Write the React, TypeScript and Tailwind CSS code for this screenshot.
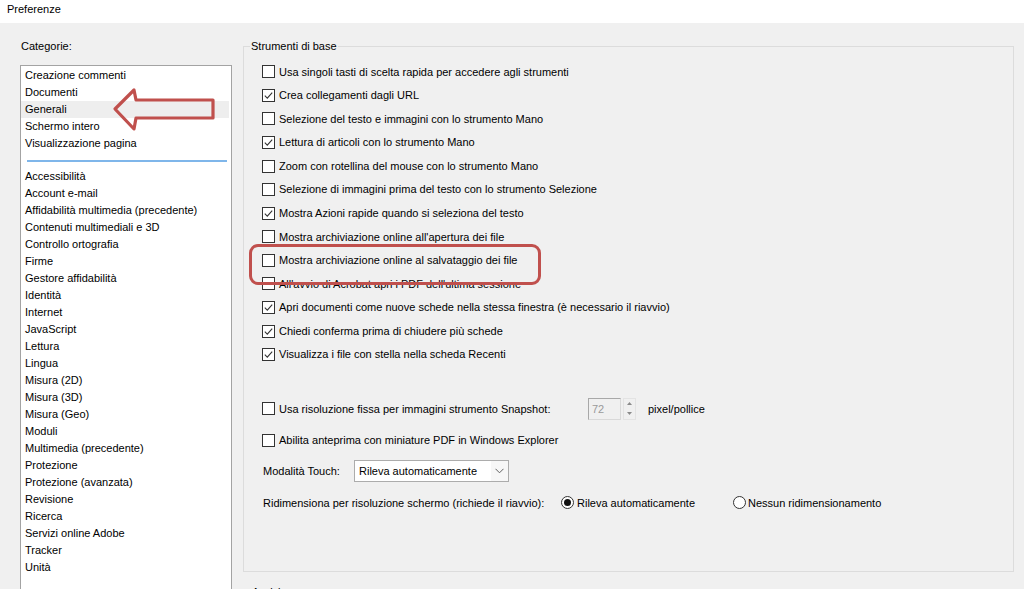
import React from "react";

const Check = ({ checked }: { checked?: boolean }) => (
  <span className="w-[13px] h-[13px] border border-[#333333] bg-white flex items-center justify-center shrink-0">
    {checked && (
      <svg width="11" height="11" viewBox="0 0 11 11">
        <path d="M1.8 5.6 L4.3 8.1 L9.2 2.6" fill="none" stroke="#333333" strokeWidth="1.1" />
      </svg>
    )}
  </span>
);

const Radio = ({ checked }: { checked?: boolean }) => (
  <span className="w-[13px] h-[13px] rounded-full border border-[#333333] bg-white flex items-center justify-center shrink-0">
    {checked && <span className="w-[7px] h-[7px] rounded-full bg-[#111111]" />}
  </span>
);

const CheckRow = ({ checked, text }: { checked?: boolean; text: string }) => (
  <div className="flex items-center h-[23.58px]">
    <Check checked={checked} />
    <span className="ml-[4px] whitespace-nowrap">{text}</span>
  </div>
);

const topItems = [
  "Creazione commenti",
  "Documenti",
  "Generali",
  "Schermo intero",
  "Visualizzazione pagina",
];

const otherItems = [
  "Accessibilità",
  "Account e-mail",
  "Affidabilità multimedia (precedente)",
  "Contenuti multimediali e 3D",
  "Controllo ortografia",
  "Firme",
  "Gestore affidabilità",
  "Identità",
  "Internet",
  "JavaScript",
  "Lettura",
  "Lingua",
  "Misura (2D)",
  "Misura (3D)",
  "Misura (Geo)",
  "Moduli",
  "Multimedia (precedente)",
  "Protezione",
  "Protezione (avanzata)",
  "Revisione",
  "Ricerca",
  "Servizi online Adobe",
  "Tracker",
  "Unità",
];

const rows: { checked?: boolean; text: string }[] = [
  { text: "Usa singoli tasti di scelta rapida per accedere agli strumenti" },
  { checked: true, text: "Crea collegamenti dagli URL" },
  { text: "Selezione del testo e immagini con lo strumento Mano" },
  { checked: true, text: "Lettura di articoli con lo strumento Mano" },
  { text: "Zoom con rotellina del mouse con lo strumento Mano" },
  { text: "Selezione di immagini prima del testo con lo strumento Selezione" },
  { checked: true, text: "Mostra Azioni rapide quando si seleziona del testo" },
  { text: "Mostra archiviazione online all'apertura dei file" },
  { text: "Mostra archiviazione online al salvataggio dei file" },
  { text: "All'avvio di Acrobat apri i PDF dell'ultima sessione" },
  { checked: true, text: "Apri documenti come nuove schede nella stessa finestra (è necessario il riavvio)" },
  { checked: true, text: "Chiedi conferma prima di chiudere più schede" },
  { checked: true, text: "Visualizza i file con stella nella scheda Recenti" },
];

export default function App() {
  return (
    <div
      className="relative w-[1024px] h-[589px] overflow-hidden flex flex-col text-[11px] text-black bg-[#f0f0f0]"
      style={{ fontFamily: '"Liberation Sans", Arial, sans-serif' }}
    >
      {/* Title bar */}
      <div className="h-[23px] bg-white shrink-0 pl-[7px] pt-[1px] leading-[17px]">Preferenze</div>

      {/* Body */}
      <div className="flex flex-1 min-h-0">
        {/* Left column */}
        <div className="w-[243px] shrink-0 pl-[20px] pt-[15px]">
          <div className="h-[17px] leading-[17px] pl-[1px]">Categorie:</div>
          <div className="mt-[10px] w-[212px] h-[560px] border border-[#a3a3a3] bg-white pt-[1px]">
            {topItems.map((t) => (
              <div
                key={t}
                className={`h-[17px] leading-[17px] pl-[4px] mr-[2px] whitespace-nowrap ${
                  t === "Generali" ? "bg-[#eeeeee]" : ""
                }`}
              >
                {t}
              </div>
            ))}
            <div className="mt-[8px] mb-[6px] ml-[6px] mr-[4px] h-[2px] bg-[#7fb6ea]" />
            {otherItems.map((t) => (
              <div key={t} className="h-[17px] leading-[17px] pl-[4px] whitespace-nowrap">
                {t}
              </div>
            ))}
          </div>
        </div>

        {/* Right column */}
        <div className="flex-1 pt-[15px]">
          <fieldset className="w-[771px] h-[534px] border border-[#dcdcdc] p-0 m-0">
            <legend className="ml-[6px] px-[1px] leading-[17px]">Strumenti di base</legend>
            <div className="pl-[18px] pt-[5px]">
              {rows.map((r) => (
                <CheckRow key={r.text} checked={r.checked} text={r.text} />
              ))}

              <div className="h-[26.6px]" />

              {/* Snapshot */}
              <div className="flex items-center h-[31.33px]">
                <div className="w-[326px] flex items-center">
                  <Check />
                  <span className="ml-[4px] whitespace-nowrap">Usa risoluzione fissa per immagini strumento Snapshot:</span>
                </div>
                <div className="w-[33px] h-[22px] border border-[#d9d9d9] border-t-[#a8a8a8] border-l-[#a8a8a8] bg-[#f0f0f0] pl-[3px] leading-[20px] text-[#9a9a9a]">
                  72
                </div>
                <div className="ml-[2px] w-[13px] h-[22px] border border-[#e3e3e3] flex flex-col items-center justify-around text-[#8a8a8a]">
                  <svg width="5" height="3" viewBox="0 0 5 3"><path d="M0 3 L2.5 0 L5 3 Z" fill="#8a8a8a" /></svg>
                  <svg width="5" height="3" viewBox="0 0 5 3"><path d="M0 0 L2.5 3 L5 0 Z" fill="#8a8a8a" /></svg>
                </div>
                <span className="ml-[12px] whitespace-nowrap">pixel/pollice</span>
              </div>

              <div className="flex items-center h-[31.33px]">
                <Check />
                <span className="ml-[4px] whitespace-nowrap">Abilita anteprima con miniature PDF in Windows Explorer</span>
              </div>

              <div className="flex items-center h-[31.33px]">
                <span className="w-[92px] pl-[1px] whitespace-nowrap">Modalità Touch:</span>
                <div className="w-[155px] h-[22px] border border-[#acacac] bg-white flex items-center">
                  <span className="flex-1 pl-[4px] whitespace-nowrap">Rileva automaticamente</span>
                  <div className="w-[17px] h-full flex items-center justify-center bg-[#f7f7f7]">
                    <svg width="9" height="6" viewBox="0 0 9 6">
                      <path d="M0.5 0.8 L4.5 4.8 L8.5 0.8" fill="none" stroke="#606060" strokeWidth="1" />
                    </svg>
                  </div>
                </div>
              </div>

              <div className="flex items-center h-[31.33px]">
                <span className="w-[299px] pl-[1px] whitespace-nowrap">Ridimensiona per risoluzione schermo (richiede il riavvio):</span>
                <div className="w-[172px] flex items-center">
                  <Radio checked />
                  <span className="ml-[3px] whitespace-nowrap">Rileva automaticamente</span>
                </div>
                <div className="flex items-center">
                  <Radio />
                  <span className="ml-[2px] whitespace-nowrap">Nessun ridimensionamento</span>
                </div>
              </div>
            </div>
          </fieldset>
          <div className="mt-[12px] ml-[9px] leading-[17px]">Avvisi</div>
        </div>
      </div>

      {/* Red highlight box */}
      <div className="absolute left-[249px] top-[244px] w-[292px] h-[41px] border-[3px] border-[#c0504d] rounded-[9px]" />

      {/* Red arrow */}
      <svg className="absolute left-[108px] top-[84px]" width="112" height="52" viewBox="0 0 112 52">
        <path
          d="M7 25 L26 6 L28 16 L105 16 L105 34 L28 34 L26 45 Z"
          fill="none"
          stroke="#c0504d"
          strokeWidth="3.2"
          strokeLinejoin="round"
        />
      </svg>
    </div>
  );
}
